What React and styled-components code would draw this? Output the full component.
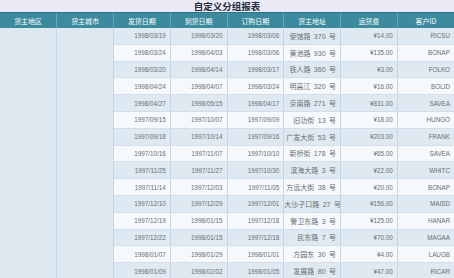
import React from "react";
import styled, { createGlobalStyle } from "styled-components";

const GlobalStyle = createGlobalStyle`
  body {
    margin: 0;
    background: #eae9f6;
    font-family: "Liberation Sans", "Noto Sans CJK SC", sans-serif;
  }
`;

const rows = [
  ["1998/03/19", "1998/03/20", "1998/03/06", "使馆路 370 号", "¥14.00", "RICSU"],
  ["1998/03/24", "1998/04/03", "1998/03/06", "黄池路 930 号", "¥135.00", "BONAP"],
  ["1998/03/20", "1998/04/14", "1998/03/17", "铁人路 360 号", "¥3.00", "FOLKO"],
  ["1998/04/24", "1998/04/07", "1998/03/24", "明高江 320 号", "¥16.00", "BOLID"],
  ["1998/04/27", "1998/05/15", "1998/04/17", "京南路 271 号", "¥831.00", "SAVEA"],
  ["1997/09/15", "1997/10/07", "1997/09/09", "旧功街 13 号", "¥18.00", "HUNGO"],
  ["1997/09/18", "1997/10/14", "1997/09/16", "广发大街 53 号", "¥203.00", "FRANK"],
  ["1997/10/16", "1997/11/07", "1997/10/10", "新桥街 178 号", "¥65.00", "SAVEA"],
  ["1997/11/25", "1997/11/27", "1997/10/30", "滨海大路 3 号", "¥22.00", "WHITC"],
  ["1997/11/14", "1997/12/03", "1997/11/05", "方远大街 38 号", "¥20.00", "BONAP"],
  ["1997/12/10", "1997/12/29", "1997/12/01", "大沙子口路 27 号", "¥156.00", "MAISD"],
  ["1997/12/19", "1998/01/15", "1997/12/18", "警卫东路 3 号", "¥125.00", "HANAR"],
  ["1997/12/22", "1998/01/15", "1997/12/18", "民东路 7 号", "¥70.00", "MAGAA"],
  ["1998/01/07", "1998/01/29", "1998/01/01", "方园东 30 号", "¥4.00", "LAUGB"],
  ["1998/01/09", "1998/02/02", "1998/01/05", "发展路 80 号", "¥47.00", "RICAR"],
];

const headers = ["货主地区", "货主城市", "发货日期", "到货日期", "订购日期", "货主地址", "运货费", "客户ID"];

function App() {
  return (
    <Page>
      <GlobalStyle />
      <Title>自定义分组报表</Title>
      <Table>
        <thead>
          <tr>
            {headers.map((h) => (
              <Th key={h}>{h}</Th>
            ))}
          </tr>
        </thead>
        <tbody>
          {rows.map((r, i) => (
            <Row key={i} $alt={i % 2 === 1}>
              {i === 0 && (
                <>
                  <Group rowSpan={rows.length}></Group>
                  <Group rowSpan={rows.length}></Group>
                </>
              )}
              {r.map((c, j) => (
                <Td key={j} $cjk={j === 3}>
                  {c}
                </Td>
              ))}
            </Row>
          ))}
        </tbody>
      </Table>
    </Page>
  );
}

export default App;

const Page = styled.div`
  width: 454px;
  height: 278px;
  overflow: hidden;
`;

const Title = styled.div`
  height: 12px;
  line-height: 13px;
  text-align: center;
  font-family: "Noto Sans CJK SC", sans-serif;
  font-weight: bold;
  font-size: 9.5px;
  color: #1f2a3a;
`;

const Table = styled.table`
  width: 454px;
  border-collapse: collapse;
  table-layout: fixed;
`;

const Th = styled.th`
  height: 15px;
  padding: 0;
  background: #3b8a9e;
  color: #ffffff;
  font-weight: normal;
  font-size: 7px;
  font-family: "Noto Sans CJK SC", sans-serif;
  border-left: 1px solid #6aa6b6;
  border-top: 1px solid #2e7386;
  &:first-child {
    border-left: none;
  }
`;

const Row = styled.tr`
  background: ${(p) => (p.$alt ? "#f5f9fc" : "#dee9f1")};
`;

const Group = styled.td`
  background: #dde8f0;
  border-right: 1px solid #c6d5e3;
  padding: 0;
`;

const Td = styled.td`
  height: 15.8px;
  padding: 0 4px 0 0;
  text-align: right;
  font-size: ${(p) => (p.$cjk ? "7px" : "6.3px")};
  word-spacing: ${(p) => (p.$cjk ? "1.5px" : "0")};
  color: #6a6f76;
  white-space: nowrap;
  border-bottom: 1px solid #d2dee9;
  border-right: 1px solid #c6d5e3;
  &:last-child {
    border-right: none;
  }
`;
